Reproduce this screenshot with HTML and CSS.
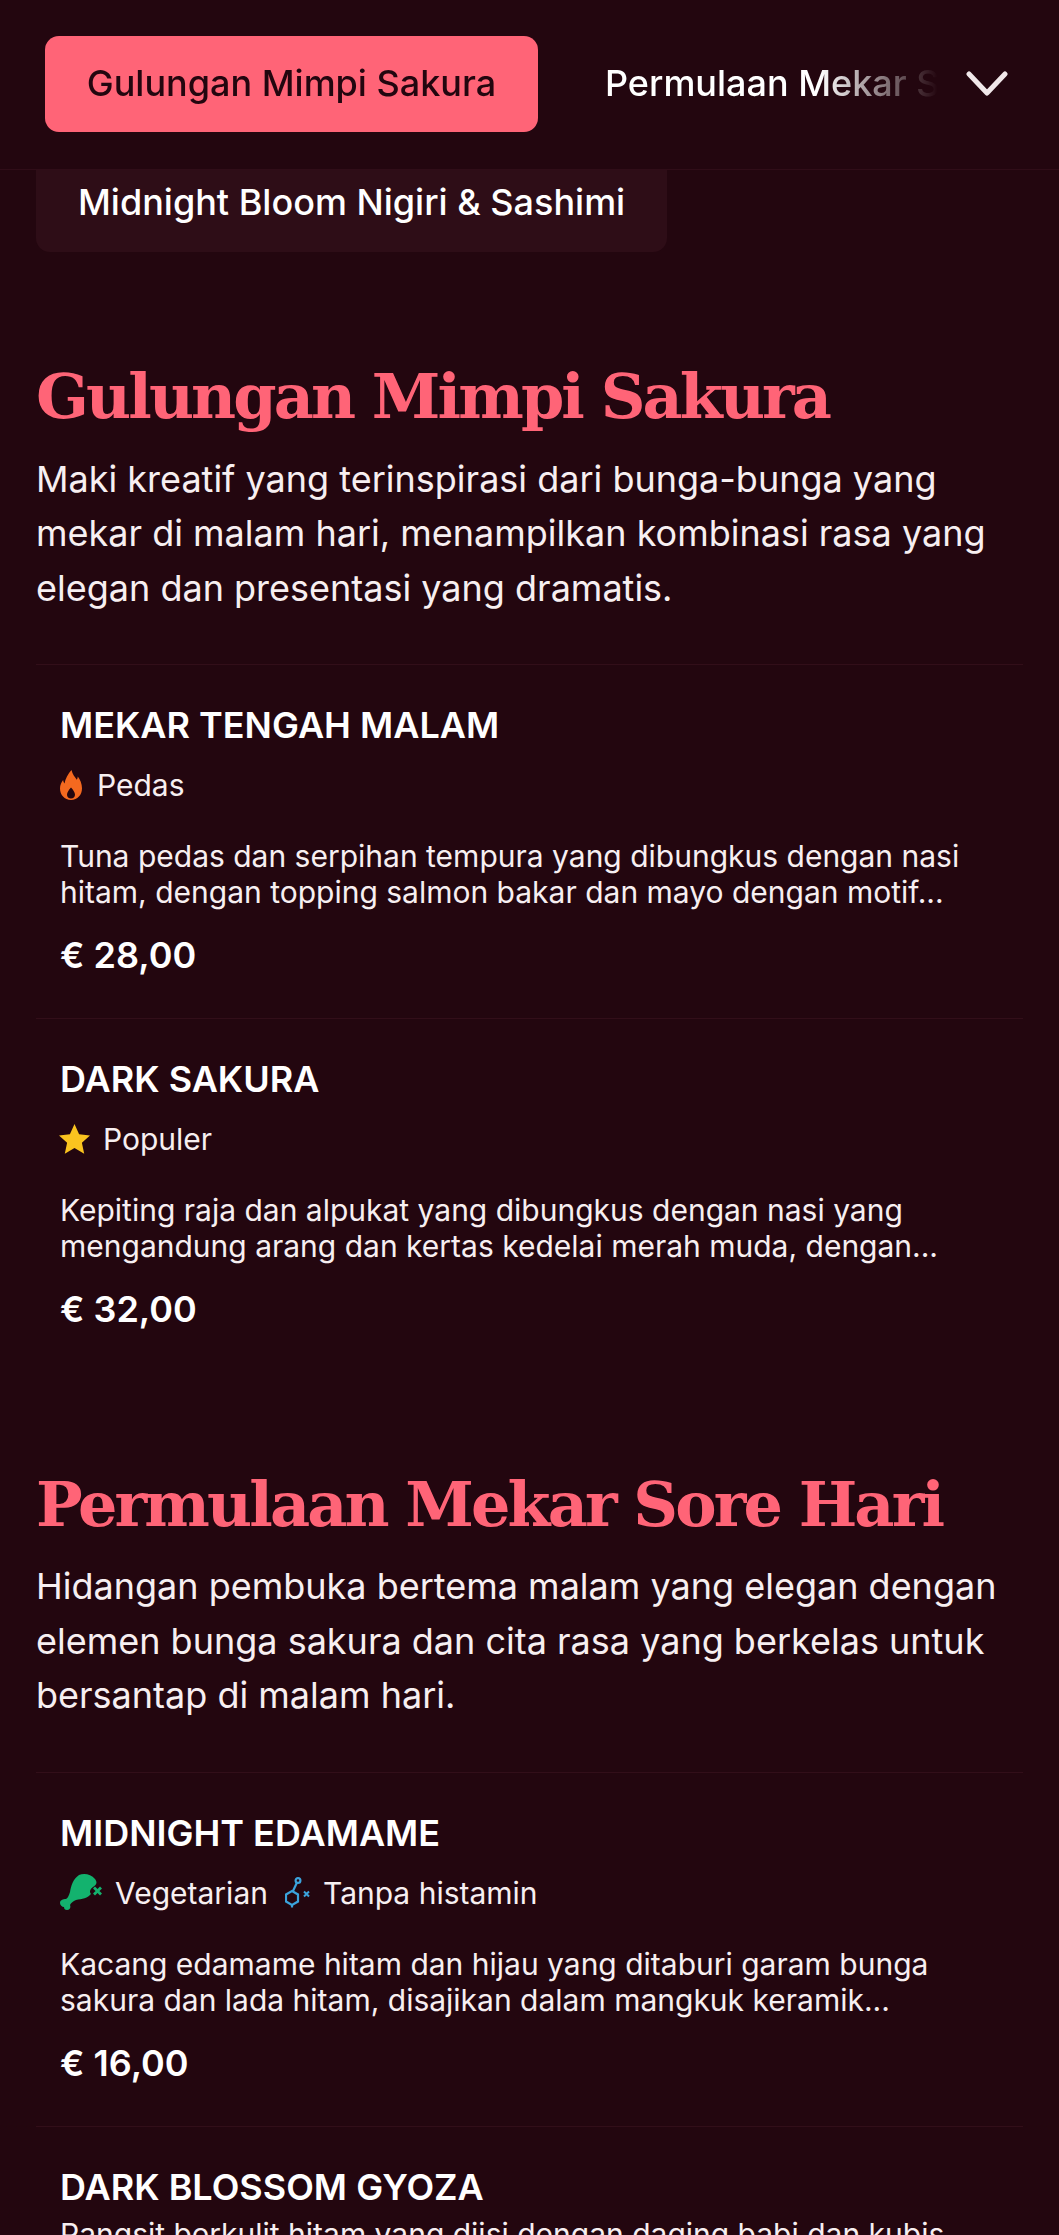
FILE: index.html
```html
<!DOCTYPE html>
<html lang="id">
<head>
<meta charset="utf-8">
<title>Menu</title>
<link rel="stylesheet" href="styles.css">
</head>
<body>
<div class="page">
  <nav class="topnav">
    <div class="tabs">
      <a class="tab active">Gulungan Mimpi Sakura</a>
      <a class="tab">Permulaan Mekar Sore Hari</a>
    </div>
    <svg class="chevron" viewBox="0 0 42 26" width="42" height="26"><path d="M3 3 L21 22 L39 3" fill="none" stroke="#f1e8ea" stroke-width="5" stroke-linecap="round" stroke-linejoin="round"/></svg>
  </nav>
  <a class="subtab">Midnight Bloom Nigiri &amp; Sashimi</a>

  <section class="section first">
    <h2>Gulungan Mimpi Sakura</h2>
    <p class="intro">Maki kreatif yang terinspirasi dari bunga-bunga yang mekar di malam hari, menampilkan kombinasi rasa yang elegan dan presentasi yang dramatis.</p>
    <article class="item">
      <h3>MEKAR TENGAH MALAM</h3>
      <div class="tags">
        <span class="tag">
          <svg class="ic-flame" viewBox="0 0 22 30" width="22" height="30"><path fill="#f4691f" fill-rule="evenodd" d="M11.500 0c1 4.500 3.200 6.800 5.300 9.700.6-1 .9-2.100 1-3.200 2.300 3.200 4.200 7.200 4.200 11.800C22 25 17.500 30 11 30S0 25 0 18.600c0-3.600 1.500-6.400 3.100-8.500.2 1.400.6 2.500 1.400 3.500C5.300 8.500 8 4 11.500 0zM11 17.500c-2.200 2.500-4 4.800-4 7.300 0 2 1.700 3.800 4 3.800s4-1.800 4-3.800c0-2.500-1.800-4.800-4-7.300z"/></svg>
          Pedas
        </span>
      </div>
      <p class="desc">Tuna pedas dan serpihan tempura yang dibungkus dengan nasi hitam, dengan topping salmon bakar dan mayo dengan motif...</p>
      <div class="price">€ 28,00</div>
    </article>
    <article class="item">
      <h3>DARK SAKURA</h3>
      <div class="tags">
        <span class="tag">
          <svg class="ic-star" viewBox="0 0 31 30" width="31" height="30"><path fill="#fac31f" d="M15.500 0l4.600 10.200 11 1.200-8.200 7.400 2.300 10.900-9.700-5.600-9.700 5.600 2.300-10.900L-.1 11.400l11-1.200z"/></svg>
          Populer
        </span>
      </div>
      <p class="desc">Kepiting raja dan alpukat yang dibungkus dengan nasi yang mengandung arang dan kertas kedelai merah muda, dengan...</p>
      <div class="price">€ 32,00</div>
    </article>
  </section>

  <section class="section">
    <h2>Permulaan Mekar Sore Hari</h2>
    <p class="intro">Hidangan pembuka bertema malam yang elegan dengan elemen bunga sakura dan cita rasa yang berkelas untuk bersantap di malam hari.</p>
    <article class="item">
      <h3>MIDNIGHT EDAMAME</h3>
      <div class="tags">
        <span class="tag">
          <svg class="ic-leg" viewBox="0 0 43 37" width="43" height="37"><path fill="#13b26e" d="M19 1C24-1 31 0 35 5c3 4 1 6-2 8-3 2-4 5-2 7-3 4-9 5-15 6-3 1-5 3-6 5 1 2 0 5-3 5-2 0-3-1-3-3-2 0-4-2-4-4 0-3 3-4 6-4 2-1 3-4 4-7C11 12 13 5 19 1z"/><path d="M34 13.500l7 7m0-7l-7 7" stroke="#13b26e" stroke-width="2.800" fill="none"/></svg>
          Vegetarian
        </span>
        <span class="tag second">
          <svg class="ic-mol" viewBox="0 0 25 32" width="25" height="32"><g fill="none" stroke="#3ba3dc" stroke-width="2.200"><circle cx="13" cy="3.500" r="2.400"/><path d="M12 5.500 8 14"/><path d="M7 14l6 3.500v7L7 28l-6-3.500v-7z"/><path d="M7 28v2.500"/></g><path d="M19 14.500l5 5m0-5l-5 5" stroke="#3ba3dc" stroke-width="2" fill="none"/></svg>
          Tanpa histamin
        </span>
      </div>
      <p class="desc">Kacang edamame hitam dan hijau yang ditaburi garam bunga sakura dan lada hitam, disajikan dalam mangkuk keramik...</p>
      <div class="price">€ 16,00</div>
    </article>
    <article class="item">
      <h3>DARK BLOSSOM GYOZA</h3>
      <p class="desc tight">Pangsit berkulit hitam yang diisi dengan daging babi dan kubis</p>
    </article>
  </section>
</div>
</body>
</html>
```
FILE: styles.css
```css
* { box-sizing: border-box; }
html, body { margin: 0; padding: 0; background: #23060f; }
.page {
  width: 1059px;
  height: 2235px;
  overflow: hidden;
  background: #23060f;
  color: #fff;
  font-family: Inter, "Liberation Sans", sans-serif;
}
.topnav {
  height: 170px;
  border-bottom: 1px solid #300d18;
  display: flex;
  align-items: flex-start;
  position: relative;
}
.tabs {
  display: flex;
  gap: 67px;
  padding: 36px 0 0 45px;
  width: 945px;
  overflow: hidden;
  white-space: nowrap;
  -webkit-mask-image: linear-gradient(to right, #000 820px, transparent 938px);
  mask-image: linear-gradient(to right, #000 820px, transparent 938px);
}
.tab {
  flex: none;
  height: 96px;
  line-height: 94px;
  font-size: 36px;
  font-weight: 500;
}
.tab.active {
  width: 493px;
  text-align: center;
  background: #ff6477;
  color: #23060f;
  border-radius: 14px;
}
.chevron { position: absolute; left: 966px; top: 71px; }
.subtab {
  display: block;
  width: 631px;
  height: 82px;
  margin-left: 36px;
  padding-left: 42px;
  line-height: 65px;
  font-size: 36px;
  font-weight: 500;
  background: #2e0d17;
  border-radius: 0 0 14px 14px;
}
.section { padding: 0 36px; }
.section.first { padding-top: 106px; }
.section + .section { margin-top: 134.500px; }
h2 {
  margin: 0;
  font-family: "DejaVu Serif", "Liberation Serif", serif;
  font-weight: 700;
  font-size: 62px;
  line-height: 78px;
  letter-spacing: -2.9px;
  color: #ff6477;
}
.intro {
  margin: 15.500px 0 49px;
  font-size: 36px;
  line-height: 54.6px;
  color: #f7eff1;
}
.item {
  height: 354px;
  border-top: 1px solid #320e19;
  padding: 38px 24px 0;
}
.section .item:last-child { height: auto; }
h3 {
  margin: 0;
  font-size: 36px;
  font-weight: 600;
  line-height: 44px;
}
.tags {
  display: flex;
  align-items: center;
  margin-top: 18.500px;
  height: 38px;
}
.tag {
  display: inline-flex;
  align-items: center;
  font-size: 30px;
  color: #f7eff1;
}
.tag svg { flex: none; }
.ic-flame { margin-right: 15px; }
.ic-star { margin-right: 13px; margin-left: -1px; }
.ic-leg { margin-right: 12px; }
.ic-mol { margin-right: 13px; }
.tag.second { margin-left: 17px; }
.desc {
  margin: 34px 0 0;
  font-size: 30px;
  line-height: 36px;
  color: #f7eff1;
}
.desc.tight { margin-top: 7px; }
.price {
  margin-top: 23.500px;
  font-size: 36px;
  font-weight: 600;
  line-height: 44px;
}
```
